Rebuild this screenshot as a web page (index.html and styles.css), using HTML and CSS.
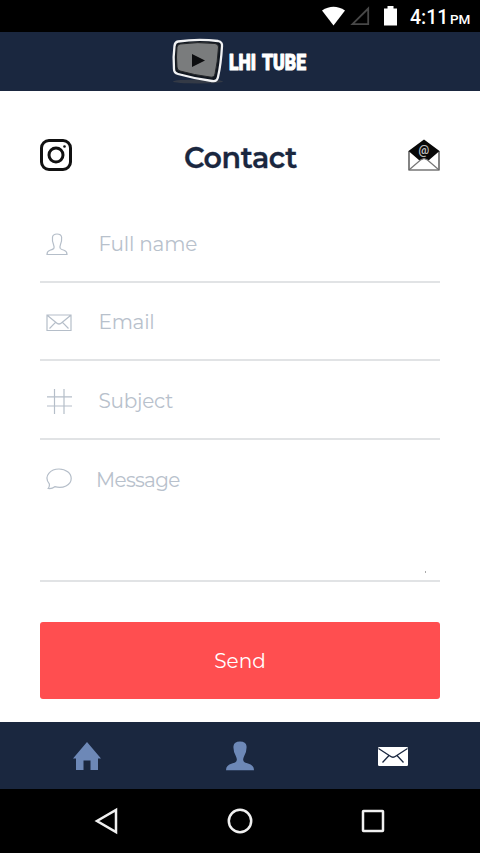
FILE: index.html
```html
<!DOCTYPE html>
<html lang="en">
<head>
<meta charset="utf-8">
<title>Contact</title>
<link rel="stylesheet" href="styles.css">
</head>
<body>
<div class="status">
  <svg class="status-icons" width="80" height="32" viewBox="320 0 80 32">
    <path d="M322 10.5Q333.500 3 345 10.500L333.500 25.500Z" fill="#fff"/>
    <path d="M368.200 8.500V24.200H352.500Z" fill="none" stroke="#484848" stroke-width="1.800"/>
    <path d="M384 8.500h3.500V6h6v2.500H397V25.500h-13Z" fill="#fff"/>
  </svg>
  <span class="time">4:11</span><span class="period">PM</span>
</div>
<header class="brand">
  <svg width="160" height="59" viewBox="160 32 160 59">
    <ellipse cx="198" cy="81.500" rx="25" ry="2" fill="#343a46"/>
    <path d="M178 41.500Q198 38.500 218 41Q222.500 42 222 46Q221 64 218 77Q217 82 212 81Q194 78.500 178 74Q174 73 174 69Q173 57 174.500 46Q175 42 178 41.500Z" fill="#111720" stroke="#f1f2f4" stroke-width="2.300"/>
    <path d="M180 44Q198 41.500 215 43.500Q218.500 44 218.500 47Q217.500 63 215 74Q214 78 210 77Q194 75 180 71Q177 70 177 67Q176 57 177 47Q177.500 44.500 180 44Z" fill="#7a7c7d" stroke="#222427"/>
    <path d="M192 54L205 60.500L192 67Z" fill="#0c0d0f"/>
    <g class="wordmark"><text x="229" y="70" textLength="27" lengthAdjust="spacingAndGlyphs">LHI</text><text x="262" y="70" textLength="44" lengthAdjust="spacingAndGlyphs">TUBE</text></g>
  </svg>
</header>
<main>
  <div class="heading">
    <svg width="32" height="32" viewBox="0 0 32 32" fill="none" stroke="#111">
      <rect x="1.500" y="1.500" width="29" height="29" rx="7.500" stroke-width="3"/>
      <circle cx="16" cy="16" r="7" stroke-width="3"/><circle cx="24.500" cy="7.500" r="1.300" fill="#111" stroke="none"/>
    </svg>
    <h1>Contact</h1>
    <svg width="32" height="32" viewBox="0 0 32 32">
      <path d="M1 12V31H31V12" fill="#fff" stroke="#333" stroke-width="1.200"/>
      <path d="M.5 12L16 .5L31.500 12L20.500 21.500L16 19.500L11.500 21.500Z" fill="#080808"/>
      <path d="M1.500 30.500L12.500 21L16 19.500L19.500 21L30.500 30.500" fill="none" stroke="#777" stroke-width="1.300"/>
      <text class="at" x="16" y="14.500" text-anchor="middle">@</text>
    </svg>
  </div>
  <form>
    <label class="field">
      <svg width="26" height="26" viewBox="0 0 26 26"><path d="M7.800 17.500Q8.500 16 7.500 13.500Q6 10 6.500 6Q7 3 11 3T15.600 6Q16 10 14.500 13.500Q13.500 16 14.300 17.500Q15 18.400 18 19.300Q21 20.300 21 23.500H1Q1 20.300 4 19.300Q7 18.400 7.800 17.500Z"/></svg>
      <span class="full">Full name</span>
    </label>
    <label class="field">
      <svg width="26" height="26" viewBox="0 0 26 26"><path d="M1 5H25V20.500H1ZM1.500 5.500L10 12.500Q13 15.500 16 12.500L24.500 5.500M3.500 18.500L9.500 12.300M22.500 18.500L16.500 12.300"/></svg>
      <span class="email">Email</span>
    </label>
    <label class="field">
      <svg width="26" height="26" viewBox="0 0 26 26"><path d="M8.500 1V26M18 1V26M1 8.800H26M1 18H26"/></svg>
      <span class="subject">Subject</span>
    </label>
    <label class="field message">
      <svg width="26" height="26" viewBox="0 0 26 26"><path d="M3.300 16.800C-3.200 8.500 5.300 2 13 2C20 2 25.200 6.200 25.200 11.500C25.200 18.200 16.800 22 8.800 19.700Q6 22 2.200 21.500Q3.800 19.500 3.300 16.800Z"/></svg>
      <span class="body">Message</span><i class="grip"></i>
    </label>
    <button type="button"><span>Send</span></button>
  </form>
</main>
<nav class="tabs">
  <svg width="30" height="30" viewBox="0 0 30 30" fill="#6d88b7"><path d="M15 1L29 17.500H26V29H18.500V19.500H11.500V29H4V17.500H1Z"/></svg>
  <svg width="30" height="30" viewBox="0 0 30 30" fill="#6d88b7"><path d="M11.800 19Q12 17.500 10.800 15Q8 10 8.500 5Q9 .5 15 .5T21.500 5Q22 10 19.200 15Q18 17.500 18.200 19Q18.500 21.500 23 22.500Q29 24 29 29.200H1Q1 24 7 22.500Q11.500 21.500 11.800 19Z"/></svg>
  <svg width="32" height="30" viewBox="0 0 32 30"><rect x="1" y="6" width="30" height="19" rx="1.200" fill="#fff"/><path d="M1.500 7.500L13 15Q16 17.500 19 15L30.500 7.500M5.500 21.500L12 14.500M26.500 21.500L20 14.500" fill="none" stroke="#1a273f" stroke-width="1.300"/></svg>
</nav>
<footer class="system">
  <svg width="26" height="28" viewBox="0 0 26 28"><path d="M22 3V25L3 14Z"/></svg>
  <svg width="26" height="28" viewBox="0 0 26 28"><circle cx="13" cy="14" r="11.200"/></svg>
  <svg width="26" height="28" viewBox="0 0 26 28"><rect x="3" y="4" width="20" height="20" rx=".5"/></svg>
</footer>
</body>
</html>
```

FILE: styles.css
```css
* { box-sizing: border-box; }
body { margin: 0; width: 480px; height: 853px; overflow: hidden; background: #fff; font-family: Montserrat, Inter, sans-serif; }
svg { display: block; flex: none; }
.status { height: 32px; display: flex; background: #000; color: #fff; padding-left: 320px; font: 500 19px/34px Roboto, sans-serif; }
.time { margin-left: 10px; width: 40px; font-size: 19.5px; font-weight: 500; line-height: 35px; }
.period { font-size: 13.5px; line-height: 38px; white-space: nowrap; }
.brand { height: 59px; padding-left: 160px; background: #1a273f; }
.wordmark { font: 900 22px Roboto, sans-serif; fill: #fff; stroke: #fff; stroke-width: 1px; stroke-linejoin: round; }
main { height: 631px; padding: 48px 40px 0; }
.heading { height: 65px; display: flex; justify-content: space-between; align-items: flex-start; }
h1 { margin: 0 0 0 1px; font-size: 28.5px; line-height: 37px; font-weight: 600; letter-spacing: -.35px; color: #1a273f; -webkit-text-stroke: .3px #1a273f; }
.at { font: 700 12px Roboto, sans-serif; fill: #bbb; }
.field { height: 78.6px; display: flex; align-items: flex-start; padding: 27px 0 0 6px; border-bottom: 2px solid #e1e3e5; color: #b8c1cc; font-size: 20px; line-height: 26px; font-weight: 400; }
.field svg { fill: none; stroke: #b5bec9; stroke-width: 1.2; margin-right: 26.5px; }
.field.message { height: 142px; position: relative; }
.message svg { margin-right: 24px; }
.full { letter-spacing: -.2px; }
.email, .subject { letter-spacing: -.25px; }
.email { line-height: 25px; }
.body { letter-spacing: -.65px; }
.grip { position: absolute; right: 14px; bottom: 7px; width: 1px; height: 2px; background: #aaa; }
button { display: block; width: 400px; height: 77px; margin: 40.2px 0 0; padding: 0; border: 0; border-radius: 3px; background: #ff4e50; color: #fff; font: 400 20px/78px Montserrat, Inter, sans-serif; }
.tabs { height: 67px; padding: 19px 71px 0 72px; display: flex; justify-content: space-between; background: #1a273f; }
.system { height: 64px; padding: 18px 94px 0; display: flex; justify-content: space-between; background: #000; }
.system svg { fill: none; stroke: #f0f0f0; stroke-width: 2.5; }
```
